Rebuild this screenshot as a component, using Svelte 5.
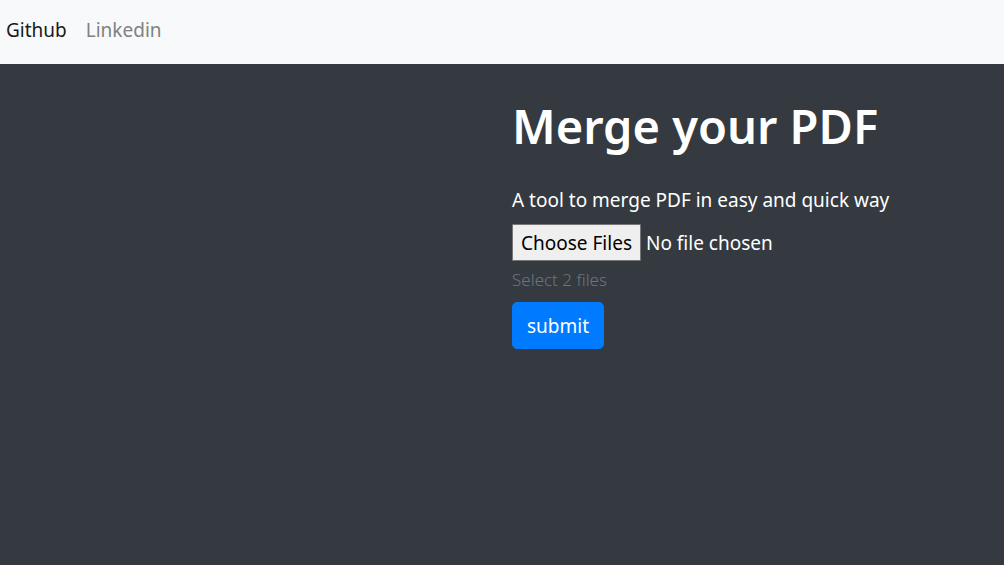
<script>
  let files = $state();
</script>

<div class="page">
  <nav aria-label="Profiles">
    <a class="active" href="#github">Github</a>
    <a href="#linkedin">Linkedin</a>
  </nav>
  <main>
    <section>
      <h1>Merge your PDF</h1>
      <form onsubmit={(event) => event.preventDefault()}>
        <label for="files">A tool to merge PDF in easy and quick way</label>
        <input id="files" type="file" multiple bind:files aria-describedby="hint" />
        <small id="hint">Select 2 files</small>
        <button type="submit">submit</button>
      </form>
    </section>
  </main>
</div>

<style>
  :global(body) {
    margin: 0;
    background: #343a40;
  }
  .page {
    min-height: 100vh;
    box-sizing: border-box;
    display: flex;
    flex-direction: column;
    border-bottom: 1px solid #3b3641;
    color: #fff;
    font: 19px/30px "Noto Sans", sans-serif;
  }
  nav {
    display: flex;
    gap: 19px;
    padding: 15px 6px 19px;
    background: #f8f9fa;
  }
  a {
    color: #808182;
    text-decoration: none;
  }
  .active {
    color: #191919;
  }
  main {
    display: grid;
    grid-template-columns: 1fr 1fr;
    padding: 32px 0;
  }
  section {
    grid-column: 2;
    padding-left: 10px;
  }
  h1 {
    margin: 0 0 29px;
    font-size: 47px;
    line-height: 60px;
    font-weight: 600;
  }
  form {
    display: flex;
    flex-direction: column;
    align-items: flex-start;
  }
  label {
    margin-bottom: 9px;
  }
  input {
    width: 100%;
    font: inherit;
    line-height: 30px;
    color: #fff;
  }
  input::file-selector-button {
    height: 37px;
    margin-right: 5px;
    padding: 1px 8px;
    border: 1px solid #767676;
    border-radius: 1px;
    background: #efefef;
    color: #000;
    font: inherit;
  }
  small {
    margin: 5px 0 8px;
    color: #6c757d;
    font-size: 17px;
    font-weight: 300;
    line-height: 28px;
  }
  button {
    padding: 9px 14px 7px;
    border: 1px solid #007bff;
    border-radius: 5px;
    background: #007bff;
    color: #fff;
    font: inherit;
    line-height: 29px;
    cursor: pointer;
  }
</style>
